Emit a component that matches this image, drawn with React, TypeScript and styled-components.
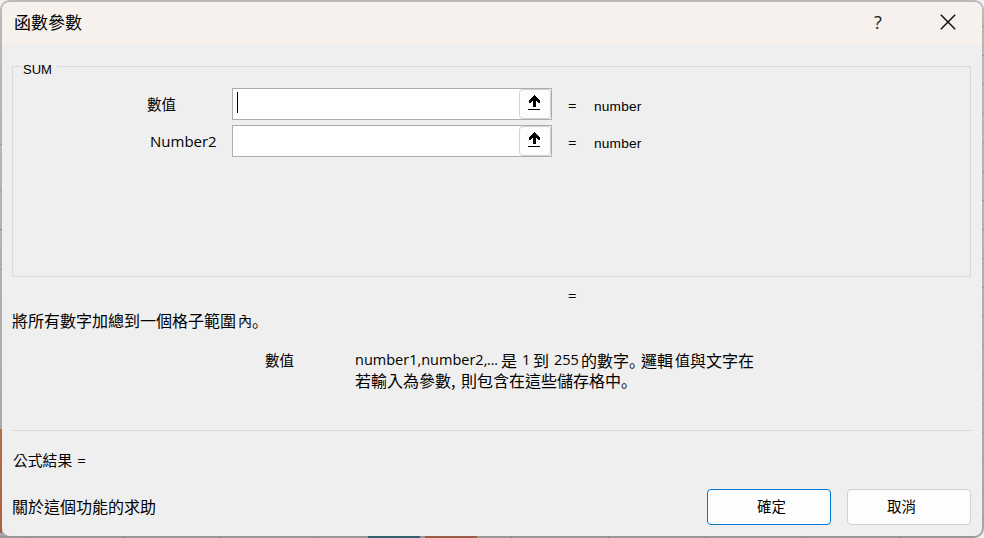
import type { ReactNode } from "react";
import styled, { createGlobalStyle } from "styled-components";

const GlobalStyle = createGlobalStyle`
  * {
    box-sizing: border-box;
  }
  body {
    margin: 0;
    overflow: hidden;
    background: #f0f0f0;
  }
`;

const Sheet = styled.div`
  width: 984px;
  height: 538px;
  padding: 2px;
  border-radius: 10px 10px 10px 0;
  background:
    linear-gradient(#35606c, #35606c) 368px 536px / 52px 2px no-repeat,
    linear-gradient(#9c5f46, #9c5f46) 425px 536px / 52px 2px no-repeat,
    linear-gradient(#b46d4e, #b0603c) 0 429px / 2px 104px no-repeat,
    linear-gradient(90deg, #888 1px, transparent 1px) 608px 536px / 97px 2px
      repeat-x,
    linear-gradient(#999, #999) 0 536px / 984px 2px no-repeat,
    linear-gradient(#8c8c8c, #8c8c8c) 0 229px / 2px 1px no-repeat,
    linear-gradient(#9a9a9a, #9a9a9a) 0 144px / 2px 1px no-repeat,
    linear-gradient(#9a9a9a, #9a9a9a) 0 190px / 2px 1px no-repeat,
    linear-gradient(#9a9a9a, #9a9a9a) 0 269px / 2px 1px no-repeat,
    linear-gradient(#999 1px, transparent 1px) 982px 142px / 2px 29px repeat-y,
    linear-gradient(#b8b8b8, #b4b4b4 30%, #a6a6a6);
  color: #000;
`;
const Dialog = styled.div`
  display: flex;
  flex-direction: column;
  width: 980px;
  height: 534px;
  border-radius: 8px;
  overflow: hidden;
  background: #efefef;
`;
const TitleBar = styled.header`
  display: flex;
  align-items: center;
  height: 43px;
  padding: 0 24px 3px 12px;
  background: #f7f1ee;
`;
const TitleButton = styled.button`
  display: flex;
  align-items: center;
  justify-content: center;
  width: 20px;
  height: 24px;
  margin-left: 50px;
  padding: 0;
  border: none;
  background: none;
  color: #222;
  font: 18px "Open Sans", sans-serif;
  &:first-of-type {
    margin-left: auto;
  }
`;
interface TextProps {
  $size: number;
  $width?: number;
  $gap?: number;
}
const Text = styled.span<TextProps>`
  flex: none;
  width: ${({ $width }) => ($width ? `${$width}px` : "auto")};
  margin-left: ${({ $gap }) => $gap ?? 0}px;
  font-family: "Noto Sans CJK TC", sans-serif;
  font-size: ${({ $size }) => $size}px;
  font-weight: 400;
  line-height: 20px;
  white-space: nowrap;
`;
/* full stop sits bottom left of its cell */
const Stop = styled(Text)`
  font-family: "Noto Sans CJK JP", sans-serif;
`;
const Latin = styled(Text)`
  font-family: "Open Sans", "Noto Sans", sans-serif;
`;
const Value = styled(Text)`
  padding-top: 5px;
  font-family: "Liberation Sans", sans-serif;
  letter-spacing: 0.2px;
`;
const Equals = styled(Latin)`
  padding-top: 2px;
`;
const Group = styled.fieldset`
  height: 222px;
  margin: 10px 11px 0 10px;
  padding: 10px 0 0;
  border: 1px solid #dadada;
`;
const Legend = styled.legend`
  height: 23px;
  margin-left: 9px;
  padding: 6px 5px 0 1px;
  font: 13px/17px "Liberation Sans", sans-serif;
`;
const Field = styled.div`
  display: flex;
  align-items: center;
  height: 32px;
  margin-bottom: 5px;
`;
const FieldLabel = styled.div<{ $left: number }>`
  display: flex;
  width: 219px;
  padding-left: ${({ $left }) => $left}px;
`;
const RefInput = styled.div`
  display: flex;
  align-items: center;
  justify-content: space-between;
  width: 320px;
  height: 32px;
  padding-left: 4px;
  border: 1px solid #abadb3;
  background: #fff;
`;
const Caret = styled.i`
  width: 1px;
  height: 21px;
  margin-bottom: 3px;
  background: #000;
`;
const PickButton = styled.button`
  display: flex;
  align-items: center;
  justify-content: center;
  width: 32px;
  height: 30px;
  margin-left: auto;
  padding: 0 2px 3px 0;
  border: 1px solid #d0d0d0;
  border-radius: 4px;
  background: #fdfdfd;
`;
const Row = styled.div<{ $left?: number; $top?: number }>`
  display: flex;
  height: 20px;
  margin-top: ${({ $top }) => $top ?? 0}px;
  padding-left: ${({ $left }) => $left ?? 0}px;
`;
const Divider = styled.div`
  height: 1px;
  margin: 40px 10px 0;
  background: #dadada;
`;
const Footer = styled.footer`
  display: flex;
  align-items: center;
  height: 36px;
  margin-top: 19px;
  padding: 0 11px 0 10px;
`;
const HelpLink = styled(Text)`
  padding-bottom: 2px;
`;
const Button = styled.button<{ $primary?: boolean; $left: number }>`
  display: flex;
  align-items: center;
  width: 124px;
  height: 36px;
  margin-left: ${({ $primary }) => ($primary ? "auto" : "16px")};
  padding: 0 0 2px ${({ $left }) => $left}px;
  border: 1px solid ${({ $primary }) => ($primary ? "#0078d4" : "#d0d0d0")};
  border-radius: 4px;
  background: #fdfdfd;
  color: #000;
`;

const CloseIcon = () => (
  <svg width="16" height="16" viewBox="0 0 16 16">
    <path d="M.8.8 15.2 15.2M15.2.8.8 15.2" stroke="#111" strokeWidth="1.5" />
  </svg>
);
const PickIcon = () => (
  <svg
    width="12"
    height="15"
    viewBox="0 0 12 15"
    shapeRendering="crispEdges"
  >
    <path d="M5 0h2v1h1v1h1v1h1v1h1v1h1v3h-2v-1h-1v-1h-1v6h-3v-6h-1v1h-1v1h-2v-3h1v-1h1v-1h1v-1h1v-1h1z" />
    <path d="M0 14h12v1h-12z" />
  </svg>
);

interface ArgumentProps {
  label: ReactNode;
  left: number;
  focused?: boolean;
}
const Argument = ({ label, left, focused }: ArgumentProps) => {
  return (
    <Field>
      <FieldLabel $left={left}>{label}</FieldLabel>
      <RefInput>
        {focused && <Caret />}
        <PickButton>
          <PickIcon />
        </PickButton>
      </RefInput>
      <Equals $size={15} $gap={16} $width={26}>
        =
      </Equals>
      <Value $size={13.7}>number</Value>
    </Field>
  );
};

const App = () => {
  return (
    <>
      <GlobalStyle />
      <Sheet>
        <Dialog>
          <TitleBar>
            <Text $size={17}>函數參數</Text>
            <TitleButton>?</TitleButton>
            <TitleButton>
              <CloseIcon />
            </TitleButton>
          </TitleBar>
          <Group>
            <Legend>SUM</Legend>
            <Argument
              label={<Text $size={14.5}>數值</Text>}
              left={134}
              focused
            />
            <Argument label={<Latin $size={15}>Number2</Latin>} left={137} />
          </Group>
          <Row $left={566} $top={8}>
            <Latin $size={15}>=</Latin>
          </Row>
          <Row $left={10} $top={5}>
            <Text $size={16}>將所有數字加總到一個格子範圍</Text>
            <Text $size={14} $gap={2}>
              內
            </Text>
            <Stop $size={16}>。</Stop>
          </Row>
          <Row $left={263} $top={20}>
            <Text $size={14.5} $width={90}>
              數值
            </Text>
            <Latin $size={14.5} $width={132}>
              number1,number2,
            </Latin>
            <Latin $size={14} $width={14}>
              ...
            </Latin>
            <Text $size={16}>是</Text>
            <Latin $size={14.5} $gap={5} $width={11}>
              1
            </Latin>
            <Text $size={16}>到</Text>
            <Latin $size={14.5} $gap={5} $width={27}>
              255
            </Latin>
            <Text $size={16}>的數字</Text>
            <Stop $size={16} $width={12}>
              。
            </Stop>
            <Text $size={16} $width={34}>
              邏輯
            </Text>
            <Text $size={15}>值</Text>
            <Text $size={16}>與文字在</Text>
          </Row>
          <Row $left={353}>
            <Text $size={16} $width={106}>
              若輸入為參數,
            </Text>
            <Text $size={16}>則包含在這些儲存格中</Text>
            <Stop $size={16}>。</Stop>
          </Row>
          <Divider />
          <Row $left={11} $top={19}>
            <Text $size={14.8}>公式結果</Text>
            <Latin $size={15} $gap={5}>
              =
            </Latin>
          </Row>
          <Footer>
            <HelpLink $size={16}>關於這個功能的求助</HelpLink>
            <Button $primary $left={49}>
              <Text $size={14.5}>確定</Text>
            </Button>
            <Button $left={39}>
              <Text $size={14.5}>取消</Text>
            </Button>
          </Footer>
        </Dialog>
      </Sheet>
    </>
  );
};

export default App;
